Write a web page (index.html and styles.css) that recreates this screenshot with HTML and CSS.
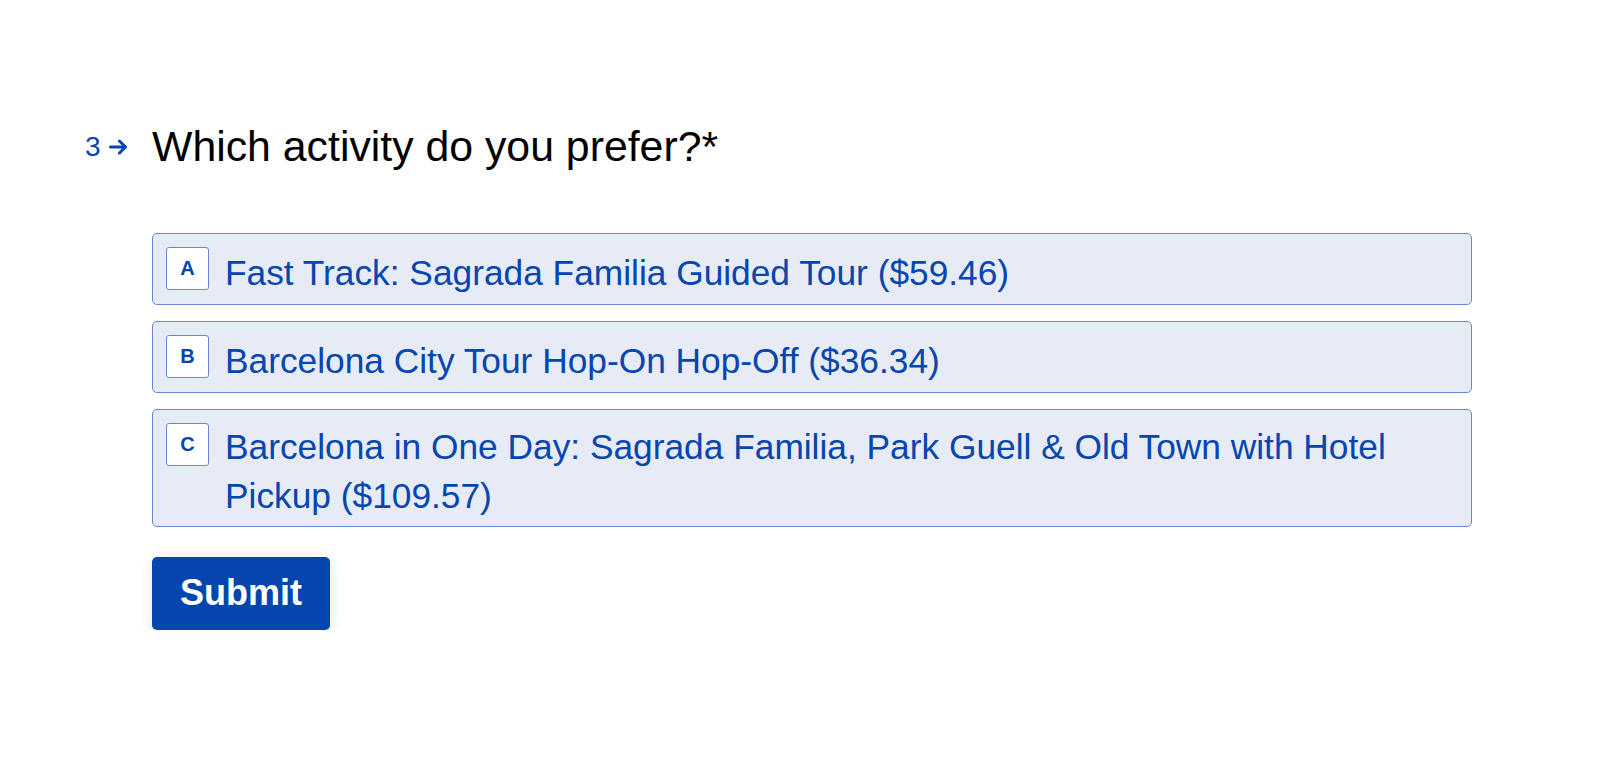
FILE: index.html
```html
<!DOCTYPE html>
<html lang="en">
<head>
<meta charset="utf-8">
<title>Which activity do you prefer?</title>
<link rel="stylesheet" href="styles.css">
</head>
<body>
<main class="form">
  <div class="question-row">
    <div class="qnum">
      <span class="num">3</span>
      <svg class="arrow" width="20" height="16" viewBox="0 0 20 16" aria-hidden="true">
        <path d="M1.5 8 H16.5 M10.5 2 L16.5 8 L10.5 14" fill="none" stroke="#0445AF" stroke-width="3" stroke-linecap="round" stroke-linejoin="round"/>
      </svg>
    </div>
    <h1 class="qtext">Which activity do you prefer?*</h1>
  </div>
  <div class="answers">
    <ul class="options">
      <li class="option">
        <span class="key">A</span>
        <span class="label">Fast Track: Sagrada Familia Guided Tour ($59.46)</span>
      </li>
      <li class="option">
        <span class="key">B</span>
        <span class="label">Barcelona City Tour Hop-On Hop-Off ($36.34)</span>
      </li>
      <li class="option">
        <span class="key">C</span>
        <span class="label">Barcelona in One Day: Sagrada Familia, Park Guell &amp; Old Town with Hotel Pickup ($109.57)</span>
      </li>
    </ul>
    <button class="submit" type="button">Submit</button>
  </div>
</main>
</body>
</html>
```

FILE: styles.css
```css
html, body {
  margin: 0;
  padding: 0;
  background: #ffffff;
}

body {
  font-family: "Liberation Sans", Arial, Helvetica, sans-serif;
  color: #000000;
}

.form {
  padding: 115px 0 0 85px;
}

.question-row {
  display: flex;
  align-items: center;
}

.qnum {
  width: 67px;
  flex: none;
  display: flex;
  align-items: center;
  gap: 8px;
  color: #0445AF;
  font-size: 28px;
  line-height: 40px;
}

.arrow {
  display: block;
}

.qtext {
  margin: 0;
  font-size: 42.8px;
  font-weight: 400;
  line-height: 63px;
  color: #000000;
}

.answers {
  margin: 55px 0 0 67px;
  width: 1320px;
}

.options {
  list-style: none;
  margin: 0;
  padding: 0;
  display: flex;
  flex-direction: column;
  gap: 16px;
}

.option {
  display: flex;
  align-items: flex-start;
  box-sizing: border-box;
  min-height: 72px;
  padding: 6px 14px 6px 13px;
  border: 1px solid #6589d0;
  border-radius: 5px;
  background: #e6ebf6;
  color: #0445AF;
}

.key {
  flex: none;
  box-sizing: border-box;
  width: 43px;
  height: 43px;
  margin-top: 7px;
  margin-right: 16px;
  display: flex;
  align-items: center;
  justify-content: center;
  border: 1px solid #6589d0;
  border-radius: 3px;
  background: #ffffff;
  font-size: 20px;
  font-weight: 700;
  color: #0445AF;
}

.label {
  align-self: center;
  padding-top: 6px;
  font-size: 35.3px;
  line-height: 49px;
}

.submit {
  margin-top: 30px;
  display: block;
  padding: 10px 28px 11px;
  border: none;
  border-radius: 5px;
  background: #0445AF;
  color: #ffffff;
  font-family: "Liberation Sans", Arial, Helvetica, sans-serif;
  font-size: 36px;
  font-weight: 700;
  line-height: 52px;
  box-shadow: 0 3px 14px rgba(0, 0, 0, 0.12);
  cursor: pointer;
}
```
